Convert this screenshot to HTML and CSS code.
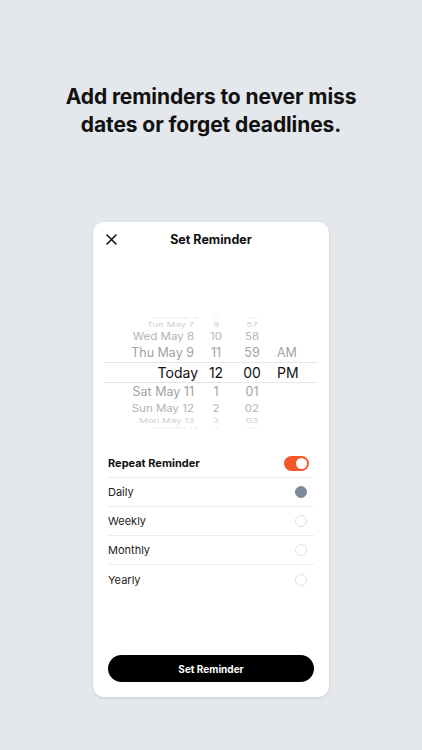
FILE: index.html
```html
<!DOCTYPE html>
<html lang="en">
<head>
<meta charset="utf-8">
<title>Set Reminder</title>
<link rel="stylesheet" href="styles.css">
</head>
<body>
<main class="screen">
  <h1 class="headline">Add reminders to never miss<br>dates or forget deadlines.</h1>
  <section class="card">
    <header class="card-header">
      <button class="close" aria-label="Close">
        <svg width="11" height="11" viewBox="0 0 11 11"><path d="M1 1L10 10M10 1L1 10" stroke="#111" stroke-width="1.6" stroke-linecap="round"/></svg>
      </button>
      <h2 class="title">Set Reminder</h2>
      <span></span>
    </header>
    <div class="picker">
      <div class="prow r4"><span class="c date">Mon May 6</span><span class="c hr">8</span><span class="c mn">56</span><span class="c ap"></span></div>
      <div class="prow r3"><span class="c date">Tue May 7</span><span class="c hr">9</span><span class="c mn">57</span><span class="c ap"></span></div>
      <div class="prow r2"><span class="c date">Wed May 8</span><span class="c hr">10</span><span class="c mn">58</span><span class="c ap"></span></div>
      <div class="prow r1"><span class="c date">Thu May 9</span><span class="c hr">11</span><span class="c mn">59</span><span class="c ap">AM</span></div>
      <div class="prow r0"><span class="c date">Today</span><span class="c hr">12</span><span class="c mn">00</span><span class="c ap">PM</span></div>
      <div class="prow r1"><span class="c date">Sat May 11</span><span class="c hr">1</span><span class="c mn">01</span><span class="c ap"></span></div>
      <div class="prow r2"><span class="c date">Sun May 12</span><span class="c hr">2</span><span class="c mn">02</span><span class="c ap"></span></div>
      <div class="prow r3"><span class="c date">Mon May 13</span><span class="c hr">3</span><span class="c mn">03</span><span class="c ap"></span></div>
      <div class="prow r4"><span class="c date">Tue May 14</span><span class="c hr">4</span><span class="c mn">04</span><span class="c ap"></span></div>
    </div>
    <ul class="options">
      <li class="opt head"><span>Repeat Reminder</span><span class="toggle"><span class="knob"></span></span></li>
      <li class="opt"><span>Daily</span><span class="radio on"></span></li>
      <li class="opt"><span>Weekly</span><span class="radio"></span></li>
      <li class="opt"><span>Monthly</span><span class="radio"></span></li>
      <li class="opt"><span>Yearly</span><span class="radio"></span></li>
    </ul>
    <button class="primary">Set Reminder</button>
  </section>
</main>
</body>
</html>
```

FILE: styles.css
```css
* { box-sizing: border-box; }
html, body { margin: 0; padding: 0; }
body {
  background: #e4e7eb;
  font-family: "Inter", "Liberation Sans", sans-serif;
  width: 422px;
  height: 750px;
  overflow: hidden;
}
.screen {
  display: flex;
  flex-direction: column;
  align-items: center;
  padding-top: 83px;
}
.headline {
  margin: 0;
  font-size: 21px;
  line-height: 28px;
  font-weight: 700;
  text-align: center;
  color: #111;
  letter-spacing: -0.1px;
}
.card {
  margin-top: 83px;
  width: 236px;
  height: 475px;
  background: #fff;
  border-radius: 11px;
  box-shadow: 0 1px 3px rgba(0,0,0,0.12);
  display: flex;
  flex-direction: column;
  padding: 0 15px 15px;
}
.card-header {
  height: 34px;
  display: grid;
  grid-template-columns: 1fr auto 1fr;
  align-items: center;
  margin: 0 -15px;
  padding: 0 13px;
}
.close {
  border: 0;
  background: none;
  padding: 0;
  width: 11px;
  height: 11px;
  display: flex;
}
.title {
  margin: 0;
  font-size: 12.5px;
  font-weight: 700;
  color: #111;
}
.picker {
  margin: 59px -4px 0;
  display: flex;
  flex-direction: column;
}
.prow {
  display: flex;
  align-items: center;
  overflow: hidden;
}
.c { display: block; white-space: nowrap; line-height: 1; }
.date { width: 94px; text-align: right; transform-origin: right center; }
.hr { width: 24px; margin-left: 6px; text-align: center; }
.mn { width: 28px; margin-left: 10px; text-align: center; }
.ap { margin-left: 11px; }
.r0 {
  height: 21px;
  font-size: 14px;
  color: #111;
  border-top: 1px solid #e6e6e6;
  border-bottom: 1px solid #e6e6e6;
}
.r1, .r2, .r3 { }
.r1 .date, .r2 .date, .r3 .date { padding-right: 4px; }
.r1 { height: 18px; font-size: 12.5px; color: #a2a2a2; }
.r2 { height: 15px; font-size: 11.5px; color: #b4b4b4; }
.r2 .c { transform: scaleY(0.85); }
.r3 { height: 9px; font-size: 10px; color: #cfcfcf; }
.r3 .c { transform: scale(0.97, 0.6); }
.r4 { height: 5px; font-size: 9px; color: #ececec; }
.r4 .c { transform: scale(0.94, 0.3); }
.options {
  list-style: none;
  margin: 19px 0 0;
  padding: 0;
}
.opt {
  height: 29px;
  display: flex;
  align-items: center;
  justify-content: space-between;
  font-size: 11px;
  color: #222;
  border-bottom: 1px solid #ececec;
  padding-right: 7px;
}
.opt:last-child { border-bottom: 0; }
.opt.head { font-weight: 700; color: #111; padding-right: 6px; }
.toggle {
  width: 25px;
  height: 15px;
  border-radius: 8px;
  background: #f2582a;
  display: flex;
  align-items: center;
  justify-content: flex-end;
  padding: 2px;
  margin-right: -1px;
}
.knob {
  width: 11px;
  height: 11px;
  border-radius: 50%;
  background: #fff;
}
.radio {
  width: 12px;
  height: 12px;
  border-radius: 50%;
  border: 1.5px solid #e0e2e5;
}
.radio.on {
  background: #7d8b9b;
  border-color: #7d8b9b;
}
.primary {
  margin-top: auto;
  height: 27px;
  border: 0;
  border-radius: 14px;
  background: #000;
  color: #fff;
  font-family: "Inter", "Liberation Sans", sans-serif;
  font-size: 10px;
  font-weight: 700;
}
```
